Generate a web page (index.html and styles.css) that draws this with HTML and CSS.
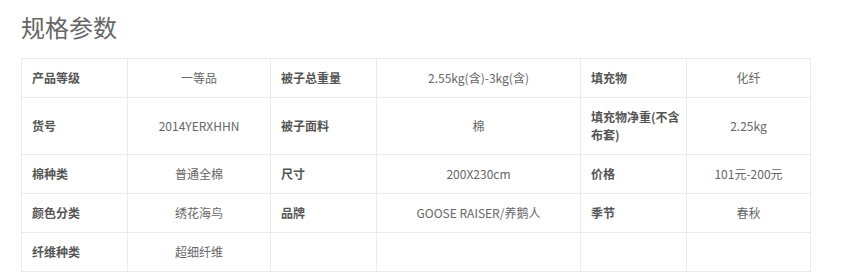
FILE: index.html
```html
<!DOCTYPE html>
<html lang="zh">
<head>
<meta charset="utf-8">
<title>规格参数</title>
<link rel="stylesheet" href="styles.css">
</head>
<body>
<div class="page">
  <h2 class="title">规格参数</h2>
  <table class="spec">
    <colgroup>
      <col class="c1"><col class="c2"><col class="c3"><col class="c4"><col class="c5"><col class="c6">
    </colgroup>
    <tr>
      <th>产品等级</th><td>一等品</td>
      <th>被子总重量</th><td>2.55kg(含)-3kg(含)</td>
      <th>填充物</th><td>化纤</td>
    </tr>
    <tr>
      <th>货号</th><td>2014YERXHHN</td>
      <th>被子面料</th><td>棉</td>
      <th>填充物净重(不含布套)</th><td>2.25kg</td>
    </tr>
    <tr>
      <th>棉种类</th><td>普通全棉</td>
      <th>尺寸</th><td>200X230cm</td>
      <th>价格</th><td>101元-200元</td>
    </tr>
    <tr>
      <th>颜色分类</th><td>绣花海鸟</td>
      <th>品牌</th><td>GOOSE RAISER/养鹅人</td>
      <th>季节</th><td>春秋</td>
    </tr>
    <tr>
      <th>纤维种类</th><td>超细纤维</td>
      <th></th><td></td>
      <th></th><td></td>
    </tr>
  </table>
</div>
</body>
</html>
```

FILE: styles.css
```css
html, body {
  margin: 0;
  padding: 0;
  background: #fff;
}
.page {
  padding: 0 21px;
  font-family: "Noto Sans CJK SC", "Noto Sans", sans-serif;
}
.title {
  margin: 0;
  padding-top: 11px;
  height: 58px;
  box-sizing: border-box;
  font-size: 24px;
  line-height: 32px;
  font-weight: normal;
  color: #666;
}
.spec {
  border-collapse: collapse;
  table-layout: fixed;
  width: 789px;
  font-size: 12px;
  line-height: 18px;
}
.c1, .c3, .c5 { width: 106px; }
.c2 { width: 143px; }
.c4 { width: 204px; }
.c6 { width: 124px; }
.spec th, .spec td {
  border: 1px solid #ebebeb;
  padding: 10px 6px 10px 10px;
  height: 18px;
  vertical-align: middle;
}
.spec th {
  text-align: left;
  font-weight: bold;
  color: #555;
}
.spec td {
  text-align: center;
  padding: 10px 6px;
  color: #666;
}
```
